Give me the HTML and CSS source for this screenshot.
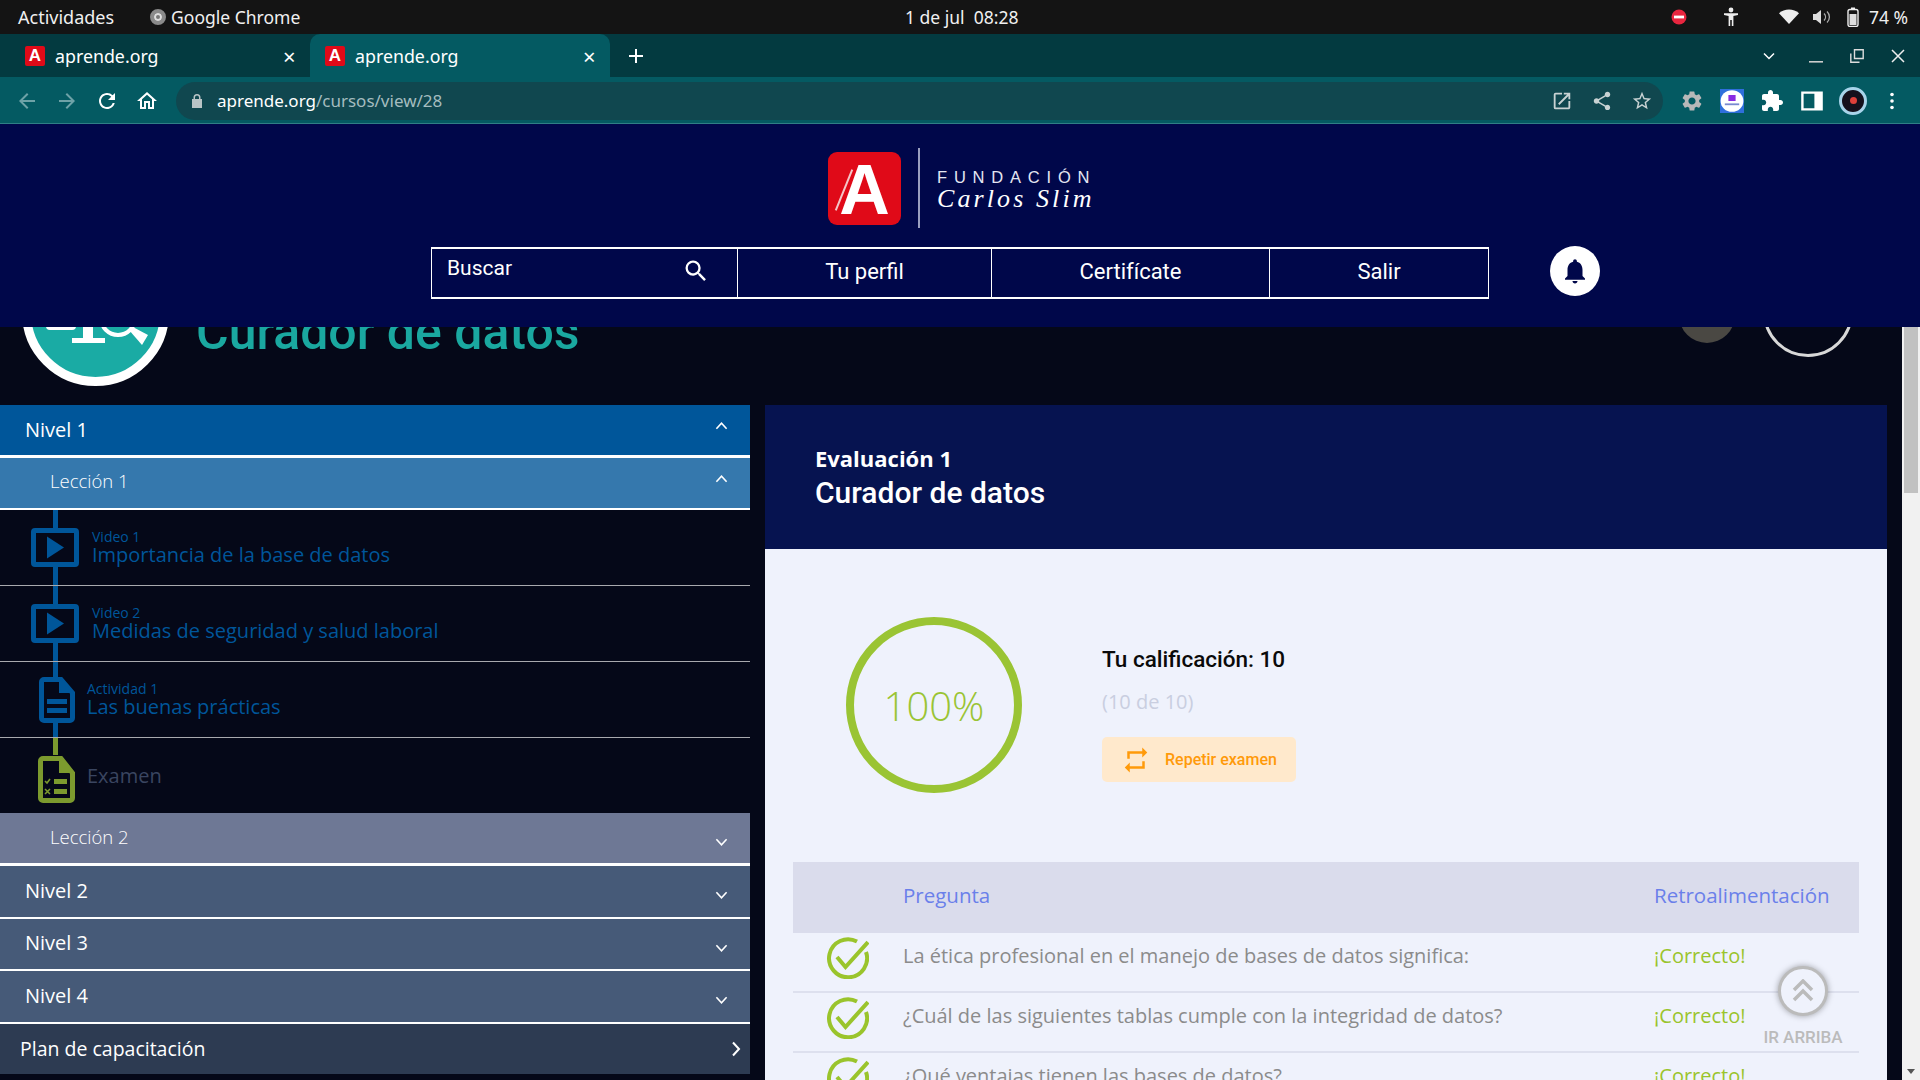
FILE: index.html
```html
<!DOCTYPE html>
<html lang="es">
<head>
    <meta charset="UTF-8">
    <title>aprende.org</title>
    <link rel="stylesheet" href="styles.css">
</head>
<body>
<div class="screen">
    <div class="os-bar">
        <div class="os-left">
            <span>Actividades</span>
            <span class="os-app"><i class="chrome-dot"></i>Google Chrome</span>
        </div>
        <div class="os-clock">1 de jul&nbsp; 08:28</div>
        <div class="os-tray">
            <svg class="tray-stop" viewBox="0 0 16 16"><circle cx="8" cy="8" r="7.5" fill="#e8263f"/><rect x="3" y="6.6" width="10" height="2.8" fill="#fff"/></svg>
            <svg class="tray-person" viewBox="0 0 16 20"><circle cx="8" cy="3" r="2.4" fill="#eee"/><path d="M1 6.2h14v1.8l-4.6 1V19H8.8v-6H7.2v6H5.6V9L1 8z" fill="#eee"/></svg>
            <svg class="tray-wifi" viewBox="0 0 20 16"><path d="M10 15L0 4.2C2.8 1.6 6.2.4 10 .4s7.2 1.2 10 3.8z" fill="#eee"/></svg>
            <svg class="tray-vol" viewBox="0 0 20 16"><path d="M1 5h3l5-4v14l-5-4H1z" fill="#ddd"/><path d="M12 4.5c2 2 2 5 0 7M15 2.5c3.2 3 3.2 8 0 11" fill="none" stroke="#aaa" stroke-width="1.3"/></svg>
            <svg class="tray-batt" viewBox="0 0 12 20"><rect x="1" y="2.5" width="10" height="17" rx="2" fill="none" stroke="#eee" stroke-width="1.4"/><rect x="4" y=".5" width="4" height="2" fill="#eee"/><rect x="2.5" y="7" width="7" height="11" fill="#ddd"/></svg>
            <span>74 %</span>
        </div>
    </div>

    <div class="tab-strip">
        <div class="tab">
            <span class="favicon">A</span><span class="tab-title">aprende.org</span><span class="tab-x">&#215;</span>
        </div>
        <div class="tab active">
            <span class="favicon">A</span><span class="tab-title">aprende.org</span><span class="tab-x">&#215;</span>
        </div>
        <svg class="new-tab" viewBox="0 0 16 16"><path d="M7 1h2v6h6v2H9v6H7V9H1V7h6z" fill="#fff"/></svg>
        <div class="win-controls">
            <svg class="win-chevron" viewBox="0 0 12 8"><path d="M1 1.5l5 5 5-5" fill="none" stroke="#fff" stroke-width="1.5"/></svg>
            <svg class="win-btn" viewBox="0 0 14 14"><rect x="0" y="12" width="14" height="1.6" fill="#ccc"/></svg>
            <svg class="win-btn" viewBox="0 0 14 14"><path d="M4.5.8h8.7v8.7H4.5zM.8 4.5v8.7h8.7" fill="none" stroke="#ddd" stroke-width="1.4"/></svg>
            <svg class="win-btn" viewBox="0 0 14 14"><path d="M1 1l12 12M13 1L1 13" stroke="#eee" stroke-width="1.5"/></svg>
        </div>
    </div>

    <div class="toolbar">
        <svg class="tool dim" viewBox="0 0 24 24"><path d="M20 11H7.83l5.59-5.59L12 4l-8 8 8 8 1.41-1.41L7.83 13H20z"/></svg>
        <svg class="tool dim" viewBox="0 0 24 24"><path d="M12 4l-1.41 1.41L16.17 11H4v2h12.17l-5.58 5.59L12 20l8-8z"/></svg>
        <svg class="tool" viewBox="0 0 24 24"><path d="M17.65 6.35A7.958 7.958 0 0 0 12 4c-4.42 0-7.99 3.58-7.99 8s3.57 8 7.99 8c3.73 0 6.84-2.55 7.73-6h-2.08A5.99 5.99 0 0 1 12 18c-3.31 0-6-2.69-6-6s2.69-6 6-6c1.66 0 3.14.69 4.22 1.78L13 11h7V4l-2.35 2.35z"/></svg>
        <svg class="tool" viewBox="0 0 24 24"><path d="M12 5.69l5 4.5V18h-2v-6H9v6H7v-7.81l5-4.5M12 3L2 12h3v8h6v-6h2v6h6v-8h3L12 3z"/></svg>
        <div class="omnibox">
            <svg class="lock" viewBox="0 0 12 16"><path d="M2.5 6V4.5a3.5 3.5 0 0 1 7 0V6H11v9H1V6zM4 6h4V4.5a2 2 0 0 0-4 0z" fill="#b9c4c6"/></svg>
            <span class="url"><b>aprende.org</b>/cursos/view/28</span>
            <span class="omni-icons">
                <svg class="tool-sm" viewBox="0 0 24 24"><path d="M19 19H5V5h7V3H5a2 2 0 0 0-2 2v14a2 2 0 0 0 2 2h14c1.1 0 2-.9 2-2v-7h-2v7zM14 3v2h3.59l-9.83 9.83 1.41 1.41L19 6.41V10h2V3h-7z"/></svg>
                <svg class="tool-sm" viewBox="0 0 24 24"><path d="M18 16.08c-.76 0-1.44.3-1.96.77L8.91 12.7c.05-.23.09-.46.09-.7s-.04-.47-.09-.7l7.05-4.11c.54.5 1.25.81 2.04.81 1.66 0 3-1.34 3-3s-1.34-3-3-3-3 1.34-3 3c0 .24.04.47.09.7L8.04 9.81C7.5 9.31 6.79 9 6 9c-1.66 0-3 1.34-3 3s1.34 3 3 3c.79 0 1.5-.31 2.04-.81l7.12 4.16c-.05.21-.08.43-.08.65 0 1.61 1.31 2.92 2.92 2.92s2.92-1.31 2.92-2.92-1.31-2.92-2.92-2.92z"/></svg>
                <svg class="tool-sm" viewBox="0 0 24 24"><path d="M22 9.24l-7.19-.62L12 2 9.19 8.63 2 9.24l5.46 4.73L5.82 21 12 17.27 18.18 21l-1.63-7.03L22 9.24zM12 15.4l-3.76 2.27 1-4.28-3.32-2.88 4.38-.38L12 6.1l1.71 4.04 4.38.38-3.32 2.88 1 4.28L12 15.4z"/></svg>
            </span>
        </div>
        <div class="ext-icons">
            <svg class="ext gear" viewBox="0 0 24 24"><path d="M19.14 12.94c.04-.3.06-.61.06-.94 0-.32-.02-.64-.07-.94l2.03-1.58a.49.49 0 0 0 .12-.61l-1.92-3.32a.488.488 0 0 0-.59-.22l-2.39.96c-.5-.38-1.03-.7-1.62-.94l-.36-2.54a.484.484 0 0 0-.48-.41h-3.84c-.24 0-.43.17-.47.41l-.36 2.54c-.59.24-1.13.57-1.62.94l-2.39-.96c-.22-.08-.47 0-.59.22L2.74 8.87c-.12.21-.08.47.12.61l2.03 1.58c-.05.3-.09.63-.09.94s.02.64.07.94l-2.03 1.58a.49.49 0 0 0-.12.61l1.92 3.32c.12.22.37.29.59.22l2.39-.96c.5.38 1.03.7 1.62.94l.36 2.54c.05.24.24.41.48.41h3.84c.24 0 .44-.17.47-.41l.36-2.54c.59-.24 1.13-.56 1.62-.94l2.39.96c.22.08.47 0 .59-.22l1.92-3.32c.12-.22.07-.47-.12-.61l-2.01-1.58zM12 15.6c-1.98 0-3.6-1.62-3.6-3.6s1.62-3.6 3.6-3.6 3.6 1.62 3.6 3.6-1.62 3.6-3.6 3.6z"/></svg>
            <svg class="ext" viewBox="0 0 20 20"><rect width="20" height="20" fill="#2f6fdc"/><ellipse cx="10" cy="10" rx="9.5" ry="9" fill="#fff"/><rect x="7" y="5" width="6" height="5" fill="#8a2be2"/><rect x="4" y="12" width="12" height="1.5" fill="#7a8ad0"/></svg>
            <svg class="ext" viewBox="0 0 24 24"><path fill="#fff" d="M20.5 11H19V7c0-1.1-.9-2-2-2h-4V3.5C13 2.12 11.88 1 10.5 1S8 2.12 8 3.5V5H4c-1.1 0-1.99.9-1.99 2v3.8H3.5c1.49 0 2.7 1.21 2.7 2.7s-1.21 2.7-2.7 2.7H2V20c0 1.1.9 2 2 2h3.8v-1.5c0-1.49 1.21-2.7 2.7-2.7s2.7 1.21 2.7 2.7V22H17c1.1 0 2-.9 2-2v-4h1.5c1.38 0 2.5-1.12 2.5-2.5S21.88 11 20.5 11z"/></svg>
            <svg class="ext" viewBox="0 0 20 20"><path fill="#fff" fill-rule="evenodd" d="M1 2h18v16H1zM3 4v12h9V4z"/></svg>
            <span class="avatar"><i></i></span>
            <svg class="dots" viewBox="0 0 4 18"><circle cx="2" cy="2.5" r="1.8"/><circle cx="2" cy="9" r="1.8"/><circle cx="2" cy="15.5" r="1.8"/></svg>
        </div>
    </div>

    <div class="page">
        <header class="site-header">
            <div class="logo">
                <span class="logo-mark">A</span>
                <span class="logo-rule"></span>
                <span class="logo-text">
                    <span class="logo-top">FUNDACIÓN</span>
                    <span class="logo-name">Carlos Slim</span>
                </span>
            </div>
            <nav class="site-nav">
                <div class="nav-box">
                    <div class="nav-search">
                        <span>Buscar</span>
                        <svg class="search-icon" viewBox="0 0 24 24"><path d="M15.5 14h-.79l-.28-.27A6.471 6.471 0 0 0 16 9.5 6.5 6.5 0 1 0 9.5 16c1.61 0 3.09-.59 4.23-1.57l.27.28v.79l5 4.99L20.49 19l-4.99-5zm-6 0C7.01 14 5 11.99 5 9.5S7.01 5 9.5 5 14 7.01 14 9.5 11.99 14 9.5 14z"/></svg>
                    </div>
                    <a class="nav-link perfil">Tu perfil</a>
                    <a class="nav-link certif">Certifícate</a>
                    <a class="nav-link salir">Salir</a>
                </div>
                <span class="bell">
                    <svg viewBox="0 0 24 24"><path d="M12 22c1.1 0 2-.9 2-2h-4c0 1.1.9 2 2 2zm6-6v-5c0-3.07-1.63-5.64-4.5-6.32V4c0-.83-.67-1.5-1.5-1.5s-1.5.67-1.5 1.5v.68C7.64 5.36 6 7.92 6 11v5l-2 2v1h16v-1l-2-2z"/></svg>
                </span>
            </nav>
        </header>

        <div class="page-scroll">
            <section class="course-head">
                <div class="badge">
                    <svg viewBox="0 0 129 129"><path d="M41 90h11V60h10v30h12v5H41z" fill="#fff"/><rect x="15" y="60" width="30" height="22" rx="4" fill="#fff"/><circle cx="87" cy="70" r="17" fill="none" stroke="#fff" stroke-width="4"/><path d="M100 78l17 9-6 10-13-15z" fill="#fff"/></svg>
                </div>
                <h1 class="course-title">Curador de datos</h1>
                <div class="head-actions">
                    <span class="round-grey"></span>
                    <span class="round-ring"></span>
                </div>
            </section>

            <div class="course-body">
                <aside class="side">
                    <div class="acc level open">Nivel 1<svg class="chev" viewBox="0 0 14 10"><path d="M1.5 8L7 2l5.5 6"/></svg></div>
                    <div class="acc lesson open">Lección 1<svg class="chev" viewBox="0 0 14 10"><path d="M1.5 8L7 2l5.5 6"/></svg></div>
                    <div class="items">
                        <div class="item">
                            <span class="ico-video"><svg viewBox="0 0 14 18"><path d="M0 0l14 9-14 9z"/></svg></span>
                            <div class="item-text video-text"><small>Video 1</small><span>Importancia de la base de datos</span></div>
                        </div>
                        <div class="item">
                            <span class="ico-video"><svg viewBox="0 0 14 18"><path d="M0 0l14 9-14 9z"/></svg></span>
                            <div class="item-text video-text"><small>Video 2</small><span>Medidas de seguridad y salud laboral</span></div>
                        </div>
                        <div class="item">
                            <svg class="ico-doc" viewBox="0 0 36 46"><path d="M5 2.5h17L33.5 16v25a2.5 2.5 0 0 1-2.5 2.5H5A2.5 2.5 0 0 1 2.5 41V5A2.5 2.5 0 0 1 5 2.5z" fill="#050818" stroke="#00569a" stroke-width="5"/><path d="M20 2h3l12 14H20z" fill="#00569a"/><rect x="8" y="22" width="20" height="5" fill="#00569a"/><rect x="8" y="31" width="20" height="5" fill="#00569a"/></svg>
                            <div class="item-text doc-text"><small>Actividad 1</small><span>Las buenas prácticas</span></div>
                        </div>
                        <div class="item last">
                            <svg class="ico-exam" viewBox="0 0 37 47"><path d="M5 2.5h18L34.5 17v25a2.5 2.5 0 0 1-2.5 2.5H5A2.5 2.5 0 0 1 2.5 42V5A2.5 2.5 0 0 1 5 2.5z" fill="#050818" stroke="#7c9a2e" stroke-width="5"/><path d="M21 2h3l13 15H21z" fill="#7c9a2e"/><rect x="16" y="23" width="13" height="5" fill="#7c9a2e"/><rect x="16" y="33" width="13" height="5" fill="#7c9a2e"/><path d="M7 25l2 2 3-4M7 33l5 5M12 33l-5 5" fill="none" stroke="#7c9a2e" stroke-width="1.6"/></svg>
                            <div class="item-text exam-text"><span>Examen</span></div>
                        </div>
                    </div>
                    <div class="acc lesson closed">Lección 2<svg class="chev down" viewBox="0 0 14 10"><path d="M1.5 2L7 8l5.5-6"/></svg></div>
                    <div class="acc level">Nivel 2<svg class="chev down" viewBox="0 0 14 10"><path d="M1.5 2L7 8l5.5-6"/></svg></div>
                    <div class="acc level">Nivel 3<svg class="chev down" viewBox="0 0 14 10"><path d="M1.5 2L7 8l5.5-6"/></svg></div>
                    <div class="acc level">Nivel 4<svg class="chev down" viewBox="0 0 14 10"><path d="M1.5 2L7 8l5.5-6"/></svg></div>
                    <div class="acc plan">Plan de capacitación<svg class="chev side-chev" viewBox="0 0 10 16"><path d="M2 1.5L8 8l-6 6.5"/></svg></div>
                </aside>

                <main class="eval">
                    <div class="eval-head">
                        <div class="eval-kicker">Evaluación 1</div>
                        <div class="eval-name">Curador de datos</div>
                    </div>
                    <div class="eval-body">
                        <div class="score">
                            <div class="score-ring">100%</div>
                            <div class="score-info">
                                <div class="score-title">Tu calificación: 10</div>
                                <div class="score-sub">(10 de 10)</div>
                                <button class="retry">
                                    <svg viewBox="0 0 24 24"><path d="M7 7h10v3l4-4-4-4v3H5v6h2V7zm10 10H7v-3l-4 4 4 4v-3h12v-6h-2v4z"/></svg>
                                    Repetir examen
                                </button>
                            </div>
                        </div>
                        <div class="q-table">
                            <div class="q-head"><span class="q-q">Pregunta</span><span class="q-r">Retroalimentación</span></div>
                            <div class="q-row">
                                <svg class="q-check" viewBox="0 0 42 42"><path d="M30 4.500A19 19 0 1 0 39 15" fill="none" stroke="#9ac42c" stroke-width="4"/><path d="M10 20l8.500 10L41 5" fill="none" stroke="#9ac42c" stroke-width="4"/></svg>
                                <span class="q-q">La ética profesional en el manejo de bases de datos significa:</span>
                                <span class="q-r ok">¡Correcto!</span>
                            </div>
                            <div class="q-row">
                                <svg class="q-check" viewBox="0 0 42 42"><path d="M30 4.500A19 19 0 1 0 39 15" fill="none" stroke="#9ac42c" stroke-width="4"/><path d="M10 20l8.500 10L41 5" fill="none" stroke="#9ac42c" stroke-width="4"/></svg>
                                <span class="q-q">¿Cuál de las siguientes tablas cumple con la integridad de datos?</span>
                                <span class="q-r ok">¡Correcto!</span>
                            </div>
                            <div class="q-row">
                                <svg class="q-check" viewBox="0 0 42 42"><path d="M30 4.500A19 19 0 1 0 39 15" fill="none" stroke="#9ac42c" stroke-width="4"/><path d="M10 20l8.500 10L41 5" fill="none" stroke="#9ac42c" stroke-width="4"/></svg>
                                <span class="q-q">¿Qué ventajas tienen las bases de datos?</span>
                                <span class="q-r ok">¡Correcto!</span>
                            </div>
                        </div>
                    </div>
                </main>
            </div>
        </div>

        <div class="scrollbar">
            <div class="thumb"></div>
            <i class="arrow-down"></i>
        </div>

        <div class="to-top">
            <span class="to-top-btn"><svg viewBox="0 0 22 24"><path d="M2 11l9-9 9 9M2 21l9-9 9 9" fill="none" stroke="#bbb" stroke-width="3.5"/></svg></span>
            <span class="to-top-label">IR ARRIBA</span>
        </div>
    </div>
</div>
</body>
</html>
```

FILE: styles.css
```css
* { box-sizing: border-box; }
html, body { margin: 0; height: 100%; overflow: hidden; }
body { font-family: "Open Sans", "Noto Sans", sans-serif; background: #050818; }
.screen { width: 1920px; height: 1080px; display: flex; flex-direction: column; overflow: hidden; }

/* ubuntu top bar */
.os-bar {
    height: 34px;
    background: #141414;
    color: #f0f0f0;
    font-family: "Noto Sans", sans-serif;
    font-size: 17.5px;
    display: flex;
    align-items: center;
    position: relative;
    padding: 0 12px 0 18px;
    flex: none;
}
.os-left { display: flex; gap: 36px; }
.os-left > span:first-child { font-size: 18px; }
.os-app { display: flex; align-items: center; gap: 5px; }
.chrome-dot { width: 16px; height: 16px; border-radius: 50%; background: #777; border: 4px solid #8a8a8a; box-shadow: inset 0 0 0 2px #ddd; }
.os-clock { position: absolute; left: 905px; }
.os-tray { margin-left: auto; display: flex; align-items: center; }
.tray-stop { width: 16px; height: 16px; margin-right: 36px; }
.tray-person { width: 16px; height: 20px; margin-right: 40px; }
.tray-wifi { width: 20px; height: 16px; margin-right: 13px; }
.tray-vol { width: 20px; height: 16px; margin-right: 15px; }
.tray-batt { width: 12px; height: 20px; margin-right: 10px; }

/* chrome */
.tab-strip {
    height: 43px;
    background: #033a40;
    display: flex;
    align-items: stretch;
    flex: none;
    color: #fff;
}
.tab { width: 310px; display: flex; align-items: center; padding-left: 25px; font-size: 17.8px; font-family: "Noto Sans", sans-serif; }
.tab.active { width: 300px; background: #045a62; border-radius: 10px 10px 0 0; padding-left: 15px; }
.favicon { width: 20px; height: 20px; background: #e00a18; border-radius: 2px; color: #fff; font: bold 17px/20px "Liberation Sans", sans-serif; text-align: center; margin-right: 10px; }
.tab-title { width: 228px; }
.tab-x { font-size: 22px; line-height: 1; }
.new-tab { width: 16px; height: 16px; align-self: center; margin-left: 18px; }
.win-controls { margin-left: auto; display: flex; align-items: center; }
.win-chevron { width: 12px; height: 8px; margin-right: 34px; }
.win-btn { width: 14px; height: 14px; margin-right: 27px; }
.win-btn:last-child { margin-right: 15px; }

.toolbar {
    height: 47px;
    background: #045a62;
    border-bottom: 1px solid #2f7f86;
    display: flex;
    align-items: center;
    padding: 1px 0 0 15px;
    flex: none;
}
.tool { width: 24px; height: 24px; fill: #fff; margin-right: 16px; }
.tool.dim { fill: #6ea2a7; }
.omnibox {
    width: 1487px;
    height: 38px;
    margin-left: 1px;
    background: #10474f;
    border-radius: 19px;
    display: flex;
    align-items: center;
    padding-left: 15px;
    font-family: "Noto Sans", sans-serif;
}
.lock { width: 12px; height: 16px; margin-right: 14px; }
.url { color: #a4bcbf; font-size: 17px; }
.url b { color: #fff; font-weight: 400; }
.omni-icons { margin-left: auto; display: flex; gap: 18px; padding-right: 10px; }
.tool-sm { width: 22px; height: 22px; fill: #c8d2d3; }
.ext-icons { display: flex; align-items: center; margin-left: 17px; }
.ext { width: 24px; height: 24px; margin-right: 16px; }
.gear { fill: #b8b8b8; }
.avatar { width: 28px; height: 28px; border-radius: 50%; background: #15101c; border: 3px solid #a8d4ea; display: flex; align-items: center; justify-content: center; margin-right: 23px; margin-left: -1px; }
.avatar i { width: 7px; height: 7px; border-radius: 50%; background: #e0403a; }
.dots { width: 4px; height: 18px; fill: #fff; }

/* page */
.page { position: relative; flex: 1; min-height: 0; overflow: hidden; }
.page-scroll { width: 1902px; }

.site-header {
    position: absolute;
    top: 0;
    left: 0;
    right: 0;
    height: 203px;
    background: #00074a;
    z-index: 5;
    color: #fff;
}
.logo { display: flex; align-items: center; padding: 24px 0 0 828px; height: 104px; }
.logo-mark { width: 73px; height: 73px; background: #e00a18; border-radius: 9px; font: bold 70px/76px "Liberation Sans", sans-serif; text-align: center; color: #fff; position: relative; }
.logo-mark::before { content: ""; position: absolute; left: 15px; top: 16px; width: 2px; height: 44px; background: #f4c6c8; transform: rotate(22deg); }
.logo-rule { width: 2px; height: 80px; background: #9a9fc0; margin: 0 17px 0 17px; }
.logo-text { display: flex; flex-direction: column; padding-top: 2px; }
.logo-top { font: 16.5px/19px "Liberation Sans", sans-serif; letter-spacing: 6.8px; color: #e4e6f2; }
.logo-name { font: italic 26px/24px "Liberation Serif", serif; color: #fff; letter-spacing: 3.1px; }
.site-nav { display: flex; align-items: flex-start; padding: 19px 0 0 431px; }
.nav-box { display: flex; width: 1058px; height: 52px; border: 1px solid #fff; border-top-width: 2px; border-bottom-width: 2px; }
.nav-search { width: 305px; display: flex; justify-content: space-between; padding: 5px 27px 0 15px; font: 21px/28px Roboto, sans-serif; }
.search-icon { width: 28px; height: 28px; fill: #fff; margin-top: 3px; }
.nav-link { border-left: 1px solid #fff; display: flex; align-items: center; justify-content: center; font: 22px Roboto, sans-serif; padding-bottom: 3px; }
.perfil { width: 254px; }
.certif { width: 278px; }
.salir { flex: 1; }
.bell { width: 50px; height: 50px; border-radius: 50%; background: #fff; margin: -1px 0 0 61px; display: flex; align-items: center; justify-content: center; }
.bell svg { width: 30px; height: 30px; fill: #00074a; }

.course-head { height: 281px; display: flex; align-items: flex-end; padding: 0 0 19px 22px; position: relative; }
.badge { width: 147px; height: 147px; border-radius: 50%; background: #1aaba4; border: 9px solid #fff; flex: none; }
.badge svg { display: block; width: 129px; height: 129px; }
.course-title { margin: 0 0 24px 27px; font: 500 50px/1.2 Roboto, sans-serif; color: #1aa8a0; }
.head-actions { margin-left: auto; display: flex; align-items: flex-end; gap: 28px; padding-right: 49px; }
.round-grey { width: 56px; height: 56px; border-radius: 50%; background: #4a4843; margin-bottom: 43px; }
.round-ring { width: 90px; height: 90px; border-radius: 50%; border: 3px solid #d8d8d8; margin-bottom: 29px; }

.course-body { display: flex; }

/* sidebar */
.side { width: 750px; flex: none; margin-right: 15px; }
.acc { display: flex; align-items: center; color: #fff; font-size: 20px; position: relative; }
.level { height: 52.5px; padding: 0 0 2.5px 25px; background: #465a78; border-bottom: 2.5px solid #fff; }
.level.open { height: 53px; padding-bottom: 1px; background: #00569a; border-bottom-width: 3px; }
.lesson { height: 52px; padding: 0 0 5px 50px; font-size: 18.5px; font-weight: 300; }
.lesson.open { background: #3578ad; border-bottom: 2px solid #fff; }
.lesson.closed { height: 53px; background: #6e7895; border-bottom: 3px solid #fff; padding-bottom: 4px; }
.plan { height: 50px; background: #2d3b52; padding-left: 20px; font-size: 19.5px; }
.chev { position: absolute; right: 22px; top: 16px; width: 13px; height: 10px; fill: none; stroke: #fff; stroke-width: 1.7; }
.chev.down { top: 24px; }
.side-chev { right: 9px; top: 17px; width: 10px; height: 16px; stroke-width: 2; }

.items { position: relative; }
.items::before {
    content: "";
    position: absolute;
    left: 53px;
    top: 0;
    width: 5px;
    height: 245px;
    background: linear-gradient(#00569a 227px, #7c9a2e 227px);
}
.item { height: 76px; display: flex; align-items: center; border-bottom: 1px solid #a8a9ae; position: relative; padding-left: 31px; }
.item.last { border-bottom: 0; height: 75px; }
.ico-video { width: 48px; height: 39px; border: 5px solid #00569a; border-radius: 4px; background: #050818; display: flex; align-items: center; justify-content: center; flex: none; }
.ico-video svg { width: 17px; height: 23px; fill: #00569a; }
.ico-doc { width: 36px; height: 46px; margin-left: 8px; flex: none; }
.ico-exam { width: 37px; height: 47px; margin-left: 7px; flex: none; margin-top: 8px; }
.item-text { display: flex; flex-direction: column; color: #00569a; }
.item-text small { font-size: 14px; line-height: 14px; }
.item-text span { font-size: 20px; line-height: 22px; }
.video-text { margin-left: 13px; }
.doc-text { margin-left: 12px; }
.exam-text { margin-left: 12px; color: #3a4560; margin-top: 1px; }

/* evaluation panel */
.eval { width: 1122px; flex: none; background: #eff2fc; }
.eval-head { height: 144px; background: #061350; color: #fff; padding: 38px 0 0 50px; }
.eval-kicker { font-size: 22px; font-weight: 700; line-height: 30px; }
.eval-name { font: 500 30px/40px Roboto, sans-serif; }
.eval-body { padding: 68px 28px 0; }
.score { display: flex; align-items: center; padding-left: 53px; }
.score-ring {
    width: 176px;
    height: 176px;
    border: 8px solid #9ac434;
    border-radius: 50%;
    color: #9ac434;
    font-size: 40px;
    font-weight: 300;
    display: flex;
    align-items: center;
    justify-content: center;
    flex: none;
}
.score-info { margin-left: 80px; padding-top: 16px; }
.score-title { font: 500 22.5px/30px Roboto, sans-serif; color: #0a0a0a; }
.score-sub { font-size: 20px; color: #c9cee0; line-height: 28px; margin-top: 14px; }
.retry {
    width: 194px;
    height: 45px;
    margin-top: 21px;
    border: 0;
    border-radius: 5px;
    background: #ffe9cc;
    color: #ff9a0a;
    font: 500 16px Roboto, sans-serif;
    display: flex;
    align-items: center;
    gap: 14px;
    padding-left: 19px;
}
.retry svg { width: 30px; height: 30px; fill: #ff9a0a; }

.q-table { margin-top: 69px; }
.q-head { height: 71px; background: #dadcec; display: flex; align-items: center; color: #6a80ea; font-size: 20.5px; padding: 0 0 5px 110px; }
.q-row { height: 60px; display: flex; align-items: center; border-bottom: 2px solid #dde0ee; color: #8b8b8b; font-size: 20px; padding: 0 0 9px 34px; }
.q-row .q-q, .q-row .q-r { margin-bottom: 5px; }
.q-check { width: 42px; height: 42px; margin-right: 34px; flex: none; }
.q-q { width: 751px; flex: none; }
.ok { color: #9ac42c; }

/* fake scrollbar, sits over the page */
.scrollbar { position: absolute; top: 203px; right: 0; bottom: 0; width: 18px; background: #f1f1f1; z-index: 3; }
.thumb { width: 14px; height: 166px; margin-left: 2px; background: #c1c1c1; }
.arrow-down { position: absolute; bottom: 6px; left: 5px; border: 4px solid transparent; border-top: 5px solid #555; border-bottom: 0; }

.to-top { position: absolute; left: 1763px; top: 842px; width: 80px; display: flex; flex-direction: column; align-items: center; z-index: 4; }
.to-top-btn { width: 50px; height: 50px; border-radius: 50%; background: #eff2fc; border: 3px solid #bbb; box-shadow: 0 0 6px rgba(0,0,0,.35); display: flex; align-items: center; justify-content: center; }
.to-top-btn svg { width: 22px; height: 24px; }
.to-top-label { font: 500 17px/20px Roboto, sans-serif; color: #bbb; margin-top: 11px; white-space: nowrap; }
```
